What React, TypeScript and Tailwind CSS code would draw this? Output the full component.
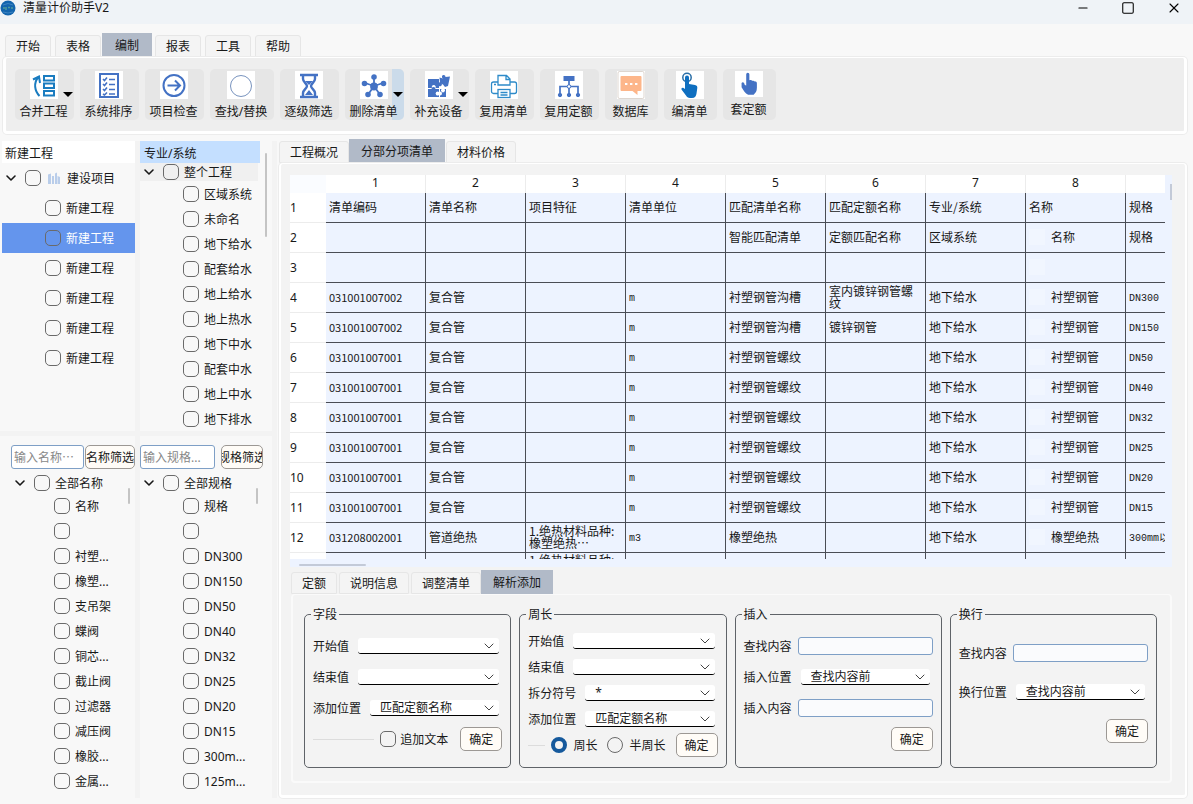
import { useState } from "react";
import type { ReactNode } from "react";
import { ChevronDown, Minus, Square, X } from "lucide-react";

const tools: { label: string; icon: ReactNode; width: string; menu?: boolean; split?: boolean; short?: boolean }[] = [
  {
    label: "合并工程",
    width: "w-[59px]",
    menu: true,
    icon: (
      <g fill="none" stroke="#1a7cc0" strokeWidth="2">
        <path d="M9.500 25C4.500 20 3.500 12 8 6.500M3 8.500L9 5.500L10 12" />
        <rect x="14" y="5" width="10" height="4.500" />
        <rect x="14" y="12.500" width="10" height="4.500" />
        <rect x="14" y="20" width="10" height="4.500" />
      </g>
    ),
  },
  {
    label: "系统排序",
    width: "w-[59px]",
    icon: (
      <g fill="none" stroke="#4472c4">
        <rect x="5" y="3" width="18" height="23" strokeWidth="2" />
        <path strokeWidth="1.600" d="M8 8l1.500 1.500L12 6.500M8 13l1.500 1.500L12 11.500M8 18l1.500 1.500L12 16.500M8 23l1.500 1L12 21.500M14 8.500h6M14 13.500h6M14 18.500h6M14 23h6" />
      </g>
    ),
  },
  {
    label: "项目检查",
    width: "w-[59px]",
    icon: (
      <g fill="none" stroke="#4472c4" strokeWidth="2">
        <circle cx="14" cy="14.500" r="10.500" />
        <path d="M7.500 14.500H20M15 9.500l5 5l-5 5" />
      </g>
    ),
  },
  {
    label: "查找/替换",
    width: "w-[64px]",
    icon: <circle cx="14" cy="15" r="10.500" fill="none" stroke="#5577ad" strokeWidth="0.800" />,
  },
  {
    label: "逐级筛选",
    width: "w-[59px]",
    icon: (
      <g fill="none" stroke="#4472c4" strokeWidth="2.400">
        <path d="M5 4h18M5 26h18M8 4v4c0 3 4 4.500 4 7s-4 4-4 7v4M20 4v4c0 3-4 4.500-4 7s4 4 4 7v4" />
        <path d="M10 10h8l-4 4zM10 24l4-5l4 5z" fill="#4472c4" stroke="none" />
      </g>
    ),
  },
  {
    label: "删除清单",
    width: "w-[59px]",
    split: true,
    icon: (
      <g fill="#4472c4" stroke="#4472c4" strokeWidth="1.800">
        <path d="M14 15V6M14 15L5 12M14 15l9-3M14 15L8.500 23M14 15l5.500 8" />
        <circle cx="14" cy="15.500" r="3" />
        <circle cx="14" cy="6" r="1.900" />
        <circle cx="4.500" cy="12.500" r="1.900" />
        <circle cx="23.500" cy="12.500" r="1.900" />
        <circle cx="8" cy="23.500" r="1.900" />
        <circle cx="20" cy="23.500" r="1.900" />
      </g>
    ),
  },
  {
    label: "补充设备",
    width: "w-[59px]",
    menu: true,
    icon: (
      <g fill="#4472c4">
        <path d="M3 8h11v3.500a2 2 0 1 1 0 3.500v2H10.500a2 2 0 1 0-3.500 0H3z" />
        <path d="M3 18h3.500a2 2 0 1 1 4 0H14v3a2 2 0 1 0 0 3v2H3z" />
        <path d="M15 18h1.500a2 2 0 1 0 3 0H21v8h-6v-1.500a2 2 0 1 0 0-4z" />
        <path d="M14.500 6.500l3.500 1a1.800 1.800 0 1 1 2.500-1.500L25 5.500l-2 9.500-3 1-2-2.500-3-1.500z" />
      </g>
    ),
  },
  {
    label: "复用清单",
    width: "w-[59px]",
    icon: (
      <g fill="#fff" stroke="#2e8bc9" strokeWidth="1.300">
        <rect x="1.500" y="11" width="25" height="11.500" rx="2" />
        <path d="M8 14V4.500h8.500L20 8v6zM16 4.500V8.500h4" />
        <rect x="8" y="18.500" width="12" height="8" />
        <path d="M10.500 21.500h7M10.500 24h7M4 13.500h2" />
      </g>
    ),
  },
  {
    label: "复用定额",
    width: "w-[59px]",
    icon: (
      <g fill="#4472c4" stroke="#4472c4">
        <rect x="9" y="5.500" width="10" height="4" />
        <path d="M14 9v14M5 23v-7.500h18V23" fill="none" strokeWidth="1.700" />
        <circle cx="14" cy="15.500" r="1.800" fill="#fff" />
        <circle cx="5" cy="24" r="1.700" />
        <circle cx="14" cy="24" r="1.700" />
        <circle cx="23" cy="24" r="1.700" />
      </g>
    ),
  },
  {
    label: "数据库",
    width: "w-[53px]",
    icon: (
      <g>
        <rect x="1" y="0.500" width="26" height="27" rx="1.500" fill="none" stroke="#cfc4bc" strokeWidth="0.700" />
        <path d="M4.500 5h19a1 1 0 0 1 1 1v13a1 1 0 0 1-1 1H20.500v4l-5-4h-11a1 1 0 0 1-1-1V6a1 1 0 0 1 1-1z" fill="#fdb68a" />
        <path d="M8 12h2.400v2H8zM13 12h2.400v2H13zM18 12h2.400v2H18z" fill="#fff" />
      </g>
    ),
  },
  {
    label: "编清单",
    width: "w-[53px]",
    icon: (
      <g>
        <circle cx="11" cy="6.500" r="4.200" fill="none" stroke="#2a6ea6" strokeWidth="1.500" />
        <path d="M9 6.500a2 2 0 0 1 4 0V13l6 1c1.800.3 2.500 1.500 2.300 3l-.8 5.500c-.3 2.500-1.500 4.500-4.500 4.500h-2c-2 0-3.200-1-4-2.500L5.500 18.500c-.5-1.500 1-2.300 2-1.500l1.500 1z" fill="#0f6fc0" />
      </g>
    ),
  },
  {
    label: "套定额",
    width: "w-[53px]",
    short: true,
    icon: (
      <path
        d="M11 3.500a1.700 1.700 0 0 1 3.400 0V10c1.500-.8 2.500-.3 3 .6c1.500-.5 2.300 0 2.700.8c1.500-.3 2.400.4 2.400 2V18c0 4-1.500 5.500-3.500 7.500h-6C10 24 8 21 6 17.500V13c.8-1.500 2-1.200 2.700 0L9.500 15l1.500.5z"
        fill="#4472c4"
      />
    ),
  },
];

const cell = (text: string, indent = false) => ({ text, indent });
const pipe = (code: string, match: string, quota: string, spec: string) => [
  cell(code), cell("复合管"), cell(""), cell("m"), cell(match), cell(quota), cell("地下给水"), cell("衬塑钢管", true), cell(spec),
];
const rows = [
  ["清单编码", "清单名称", "项目特征", "清单单位", "匹配清单名称", "匹配定额名称", "专业/系统", "名称", "规格"].map((t) => cell(t)),
  [cell(""), cell(""), cell(""), cell(""), cell("智能匹配清单"), cell("定额匹配名称"), cell("区域系统"), cell("名称", true), cell("规格")],
  [cell(""), cell(""), cell(""), cell(""), cell(""), cell(""), cell(""), cell("", true), cell("")],
  pipe("031001007002", "衬塑钢管沟槽", "室内镀锌钢管螺纹", "DN300"),
  pipe("031001007002", "衬塑钢管沟槽", "镀锌钢管", "DN150"),
  pipe("031001007001", "衬塑钢管螺纹", "", "DN50"),
  pipe("031001007001", "衬塑钢管螺纹", "", "DN40"),
  pipe("031001007001", "衬塑钢管螺纹", "", "DN32"),
  pipe("031001007001", "衬塑钢管螺纹", "", "DN25"),
  pipe("031001007001", "衬塑钢管螺纹", "", "DN20"),
  pipe("031001007001", "衬塑钢管螺纹", "", "DN15"),
  [cell("031208002001"), cell("管道绝热"), cell("1.绝热材料品种:橡塑绝热…"), cell("m3"), cell("橡塑绝热"), cell(""), cell("地下给水"), cell("橡塑绝热", true), cell("300mm以内")],
];

function Tabs({ items, active, onPick, className, wide }: {
  items: string[];
  active: string;
  onPick: (t: string) => void;
  className: string;
  wide?: boolean;
}) {
  return (
    <div role="tablist" className={`flex h-6 items-end ${className}`}>
      {items.map((t) =>
        t === active ? (
          <button
            key={t}
            role="tab"
            aria-selected="true"
            className={`h-6 bg-[#b1bac8] pt-0.5 ${wide ? "-ml-[3px] mr-[3px] px-[13px]" : "-ml-0.5 mr-px px-3"}`}
          >
            {t}
          </button>
        ) : (
          <button
            key={t}
            role="tab"
            aria-selected="false"
            onClick={() => onPick(t)}
            className={`h-[22px] rounded-t-[3px] border border-[#e6e6e6] bg-[#f4f4f4] px-2.5 pt-0.5 ${wide ? "mr-1" : "mr-0.5"}`}
          >
            {t}
          </button>
        ),
      )}
    </div>
  );
}

const box = "size-4 shrink-0 appearance-none rounded-[5px] border border-[#6a6a6a] checked:bg-[#005fb8]";

function Tree({ root, items, pad, rootHeight, rowHeight, selected, folder, highlight }: {
  root: string;
  items: string[];
  pad: string;
  rootHeight: string;
  rowHeight: string;
  selected?: number;
  folder?: boolean;
  highlight?: boolean;
}) {
  return (
    <ul>
      <li className={`flex items-center ${pad} ${rootHeight} ${highlight ? "mr-[14px] bg-[#f0f0f0]" : ""}`}>
        <ChevronDown className="-ml-0.5 mr-1.5 size-4 shrink-0" strokeWidth={2.4} />
        <label className="flex items-center gap-[5px] whitespace-nowrap">
          <input type="checkbox" className={box} />
          {folder && (
            <svg viewBox="0 0 14 14" className="mx-px size-3.5" fill="#b9cdea">
              <path d="M1 3.500l3-1V13H1zM5 5h2v8H5zM8 2.500l2-1V13H8zM10.500 5l2.500 1v7h-2.500z" />
            </svg>
          )}
          <span className="pt-0.5">{root}</span>
        </label>
      </li>
      {items.map((t, i) => (
        <li key={i} className={`${pad} ${rowHeight} ${selected === i ? "bg-[#6495ed] text-white" : ""}`}>
          <label className="flex h-full items-center gap-[5px] whitespace-nowrap pl-10">
            <input type="checkbox" aria-label={t || "空"} className={`${box} ${selected === i ? "border-[#2b3f66]" : ""}`} />
            <span className="pt-0.5">{t}</span>
          </label>
        </li>
      ))}
    </ul>
  );
}

function Select({ options, label, inset }: { options: string[]; label: string; inset?: boolean }) {
  return (
    <label className="flex h-6 items-center">
      <span className="shrink-0 whitespace-nowrap pt-0.5">{label}</span>
      <span className={`relative ml-[9px] flex flex-1 ${inset ? "mr-[3px]" : ""}`}>
        <select className="h-4 w-full min-w-0 appearance-none rounded-[3px] border-b border-black bg-white pl-2.5 leading-[15px]">
          {options.map((o) => (
            <option key={o}>{o}</option>
          ))}
        </select>
        <ChevronDown className="pointer-events-none absolute right-0.5 top-0 size-4 text-[#444]" strokeWidth={1.5} />
      </span>
    </label>
  );
}

function TextField({ label }: { label: string }) {
  return (
    <label className="flex h-6 items-center">
      <span className="shrink-0 whitespace-nowrap pt-0.5">{label}</span>
      <input type="text" className="ml-1.5 h-[18px] w-full min-w-0 flex-1 rounded-[3px] border border-[#7e9fc6] bg-[#fafbfd] px-1" />
    </label>
  );
}

function Group({ title, className, children }: { title: string; className: string; children: ReactNode }) {
  return (
    <fieldset className="h-[164px] min-w-0 rounded-[5px] border border-[#5f6368] px-2">
      <legend className="-ml-0.5 h-5 px-0.5 leading-[21px]">{title}</legend>
      <div className={`flex flex-col ${className}`}>{children}</div>
    </fieldset>
  );
}

function Confirm() {
  return (
    <button className="h-6 w-[42px] shrink-0 rounded-[5px] border border-[#9c9894] bg-[#fffcf7] pt-0.5">确定</button>
  );
}

const filterInput = "h-6 min-w-0 rounded-[3px] border border-[#7e9fc6] bg-white px-0.5 placeholder:text-[#888]";
const filterButton = "flex h-6 items-center justify-center overflow-hidden whitespace-nowrap rounded-[5px] border border-[#9c9894] bg-[#fffcf7] pt-0.5";

export default function App() {
  const [menu, setMenu] = useState("编制");
  const [view, setView] = useState("分部分项清单");
  const [detail, setDetail] = useState("解析添加");

  return (
    <div className="flex min-h-screen flex-col bg-[#f8f8f8] font-['Noto_Sans','Noto_Sans_CJK_SC',sans-serif] text-xs text-[#181818]">
      <header className="flex h-6 items-start justify-between bg-[#eff3f7]">
        <h1 className="flex items-center gap-[7px]">
          <svg viewBox="0 0 16 16" className="size-4">
            <circle cx="8" cy="8" r="7.500" fill="#1264ad" />
            <path d="M3 8h2M6 7v3M8 7.500h2M11 8h2" stroke="#4f9a9a" strokeWidth="1.500" />
            <path d="M3 5q5-3 10 0M3 12q5 2 10 0" stroke="#3c83c2" fill="none" />
          </svg>
          清量计价助手V2
        </h1>
        <div className="mr-[11px] flex gap-[31px] text-black">
          <button aria-label="最小化"><Minus className="size-3.5" strokeWidth={1.8} /></button>
          <button aria-label="最大化"><Square className="size-3.5" strokeWidth={1.8} /></button>
          <button aria-label="关闭"><X className="size-4" strokeWidth={1.6} /></button>
        </div>
      </header>

      <Tabs items={["开始", "表格", "编制", "报表", "工具", "帮助"]} active={menu} onPick={setMenu} className="mt-[9px] pl-[5px]" wide />
      <section className="mx-[3px] mr-1.5 flex h-[77px] gap-1.5 rounded-[4px] border-x-[3px] border-b-[3px] border-t border-white bg-[#eee] pl-[9px] pt-[11px] ring-1 ring-[#ececec]">
        {tools.map((t) => (
          <button
            key={t.label}
            className={`relative flex h-[51px] ${t.width} shrink-0 flex-col items-center overflow-hidden rounded-[5px] bg-[#e6e6e6] pr-0.5`}
          >
            {t.split && <span className="absolute inset-y-0 right-0 w-3 bg-[#cbdbea]" />}
            <svg viewBox="0 0 28 28" className={`relative mt-0.5 w-7 shrink-0 bg-white ${t.short ? "h-[26px]" : "h-7"}`}>{t.icon}</svg>
            <span className="relative whitespace-nowrap leading-[26px]">{t.label}</span>
            {(t.menu || t.split) && (
              <span className="absolute right-px top-[23px] border-x-[5px] border-t-[5px] border-x-transparent border-t-black" />
            )}
          </button>
        ))}
      </section>

      <div className="mt-[7px] flex flex-1">
        <aside className="mb-1.5 grid w-[277px] shrink-0 grid-cols-[135px_132px] grid-rows-[290px_1fr] gap-[5px] border-r-[5px] border-[#f3f3f3] bg-[#f3f3f3]">
          <section className="overflow-hidden bg-[#f8f8f8] pl-0.5">
            <h2 className="h-[22px] bg-white pl-[3px] leading-[25px]">新建工程</h2>
            <Tree root="建设项目" items={Array(6).fill("新建工程")} pad="pl-[3px]" rootHeight="h-[30px]" rowHeight="h-[30px]" selected={1} folder />
          </section>
          <section className="relative overflow-hidden bg-[#f8f8f8]">
            <h2 className="mr-3 h-[22px] bg-[#c4dfff] pl-1 leading-[25px]">专业/系统</h2>
            <Tree
              root="整个工程"
              items={["区域系统", "未命名", "地下给水", "配套给水", "地上给水", "地上热水", "地下中水", "配套中水", "地上中水", "地下排水"]}
              pad="pl-[3px]"
              rootHeight="h-[18px]"
              rowHeight="h-[25px]"
              highlight
            />
            <span className="absolute right-[5px] top-3 h-[84px] w-0.5 rounded bg-[#c4c4c4]" />
          </section>
          <section className="relative overflow-hidden bg-[#f8f8f8] pt-[9px]">
            <div className="mb-[3px] flex gap-px pl-[11px]">
              <input aria-label="名称" placeholder="输入名称…" className={`${filterInput} w-[73px] pb-0.5 font-['Noto_Sans_CJK_SC',sans-serif]`} />
              <button className={`${filterButton} w-[50px]`}>名称筛选</button>
            </div>
            <Tree
              root="全部名称"
              items={["名称", "", "衬塑...", "橡塑...", "支吊架", "蝶阀", "铜芯...", "截止阀", "过滤器", "减压阀", "橡胶...", "金属..."]}
              pad="pl-[14px]"
              rootHeight="h-[21px]"
              rowHeight="h-[25px]"
            />
            <span className="absolute right-[5px] top-[52px] h-4 w-0.5 rounded bg-[#c4c4c4]" />
          </section>
          <section className="relative overflow-hidden bg-[#f8f8f8] pt-[9px]">
            <div className="mb-[3px] flex gap-1.5">
              <input aria-label="规格" placeholder="输入规格..." className={`${filterInput} w-[75px]`} />
              <button className={`${filterButton} w-[42px]`}>规格筛选</button>
            </div>
            <Tree
              root="全部规格"
              items={["规格", "", "DN300", "DN150", "DN50", "DN40", "DN32", "DN25", "DN20", "DN15", "300m...", "125m..."]}
              pad="pl-[3px]"
              rootHeight="h-[21px]"
              rowHeight="h-[25px]"
            />
            <span className="absolute right-3.5 top-[52px] h-4 w-0.5 rounded bg-[#c4c4c4]" />
          </section>
        </aside>

        <main className="mb-1.5 ml-0.5 mr-1.5 flex min-w-0 flex-1 flex-col">
          <Tabs items={["工程概况", "分部分项清单", "材料价格"]} active={view} onPick={setView} className="-mt-0.5" />
          <section className="flex flex-1 flex-col rounded-[4px] border-x-2 border-b-[3px] border-t border-white bg-[#f3f3f3] pl-[9px] pr-[13px] pt-[11px] ring-1 ring-[#ececec]">
            <div className="relative bg-[#edf3ff] pb-2 pr-[7px]">
              <div className="h-[384px] overflow-hidden">
                <table className="w-[936px] table-fixed border-separate border-spacing-0">
                  <thead>
                    <tr className="h-[18px] bg-white">
                      <th className="w-9 bg-[#fafcff]" />
                      {rows[0].map((_, i) => (
                        <th key={i} scope="col" className="w-[100px] border-r border-[#ececec] p-0 align-top font-normal leading-[15px]">
                          {i < 8 ? i + 1 : ""}
                        </th>
                      ))}
                    </tr>
                  </thead>
                  <tbody>
                    {rows.map((r, i) => (
                      <tr key={i} className="h-[30px]">
                        <th scope="row" className="border-b border-[#ececec] bg-white p-0 text-left font-normal">
                          {i + 1}
                        </th>
                        {r.map((c, j) => (
                          <td
                            key={j}
                            className={`h-[30px] overflow-hidden border-b border-r border-[#4a4d55] p-0 pb-px pl-[3px] pr-1.5 font-['Noto_Sans_CJK_SC',sans-serif] leading-3 ${j === 8 ? "whitespace-nowrap" : ""}`}
                          >
                            {c.indent ? (
                              <span className="flex items-center gap-1.5">
                                <span className="h-4 w-4 bg-[#f1f6ff]" />
                                {c.text}
                              </span>
                            ) : j === 0 && i > 0 ? (
                              <span className="text-[11px]">{c.text}</span>
                            ) : (j === 3 || j === 8) && i > 1 ? (
                              <span className="font-['Liberation_Mono','Noto_Sans_CJK_SC',monospace] text-[10px]">{c.text}</span>
                            ) : (
                              c.text
                            )}
                          </td>
                        ))}
                      </tr>
                    ))}
                    <tr className="h-[30px]">
                      <th className="bg-white" />
                      {rows[0].map((_, j) => (
                        <td key={j} className="border-r border-[#4a4d55] p-0 pl-[3px] pt-px align-top font-['Noto_Sans_CJK_SC',sans-serif] leading-3">
                          {j === 2 ? "1.绝热材料品种:" : ""}
                        </td>
                      ))}
                    </tr>
                  </tbody>
                </table>
              </div>
              <span className="absolute right-0 top-[9px] h-4 w-0.5 bg-[#c3cad8]" />
              <span className="absolute bottom-px left-[9px] h-0.5 w-[67px] rounded bg-[#c3cad8]" />
            </div>

            <Tabs items={["定额", "说明信息", "调整清单", "解析添加"]} active={detail} onPick={setDetail} className="mt-[3px] pl-px" />
            <section className="ml-px grid grid-cols-4 gap-2 rounded-[4px] border-2 border-t border-[#fafafa] pb-[13px] pl-[11px] pr-[13px] pt-[9px]">
              <Group title="字段" className="gap-[7px] pt-2.5">
                <div className="mr-[3px] flex flex-col gap-[7px]">
                  <Select label="开始值" options={[""]} />
                  <Select label="结束值" options={[""]} />
                  <Select label="添加位置" options={["匹配定额名称"]} />
                </div>
                <div className="flex items-center">
                  <hr className="mr-1.5 flex-1 border-[#dcdcdc]" />
                  <label className="mr-3 flex items-center gap-1">
                    <input type="checkbox" className={box} />
                    <span className="pt-0.5">追加文本</span>
                  </label>
                  <Confirm />
                </div>
              </Group>
              <Group title="周长" className="gap-0.5 pt-[5px]">
                <div className="mr-[3px] flex flex-col gap-0.5">
                  <Select label="开始值" options={[""]} />
                  <Select label="结束值" options={[""]} />
                  <Select label="拆分符号" options={["*"]} />
                  <Select label="添加位置" options={["匹配定额名称"]} />
                </div>
                <div className="flex items-center">
                  <hr className="mr-1.5 flex-1 border-[#dcdcdc]" />
                  <label className="mr-2.5 flex items-center gap-1.5">
                    <input type="radio" name="span" defaultChecked className="size-4 appearance-none rounded-full border border-[#6a6a6a] checked:border-4 checked:border-[#15599c]" />
                    <span className="pt-0.5">周长</span>
                  </label>
                  <label className="mr-2.5 flex items-center gap-1.5">
                    <input type="radio" name="span" className="size-4 appearance-none rounded-full border border-[#6a6a6a] checked:border-4 checked:border-[#15599c]" />
                    <span className="pt-0.5">半周长</span>
                  </label>
                  <Confirm />
                </div>
              </Group>
              <Group title="插入" className="gap-[7px] pt-2.5">
                <TextField label="查找内容" />
                <Select label="插入位置" options={["查找内容前", "查找内容后"]} inset />
                <TextField label="插入内容" />
                <div className="flex justify-end"><Confirm /></div>
              </Group>
              <Group title="换行" className="gap-[15px] pt-[17px]">
                <TextField label="查找内容" />
                <Select label="换行位置" options={["查找内容前", "查找内容后"]} inset />
                <div className="flex justify-end"><Confirm /></div>
              </Group>
            </section>
          </section>
        </main>
      </div>
    </div>
  );
}
